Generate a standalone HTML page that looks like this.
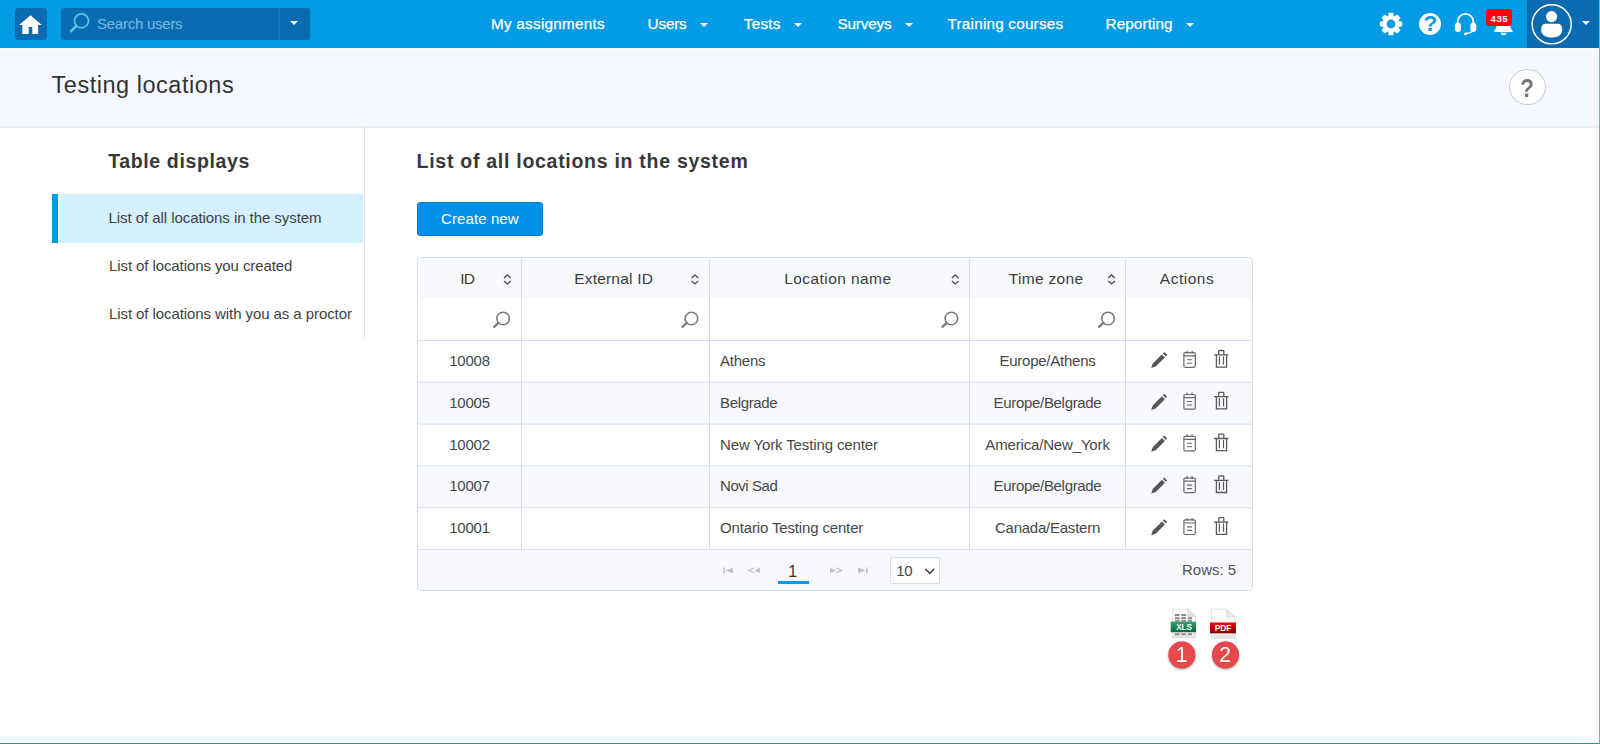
<!DOCTYPE html>
<html lang="en">
<head>
<meta charset="utf-8">
<title>Testing locations</title>
<style>
*{box-sizing:border-box;margin:0;padding:0}
html,body{width:1600px;height:744px;overflow:hidden;background:#fff}
body{position:relative;font-family:"Liberation Sans",sans-serif;color:#3a3a3a;font-size:15px}
.abs{position:absolute}
.t{position:absolute;white-space:nowrap;line-height:1}
/* top bar */
#topbar{position:absolute;left:0;top:0;width:1600px;height:48px;background:#039be5}
#home{position:absolute;left:15px;top:8px;width:32px;height:32px;border-radius:4px;background:#0b6bb0}
#search{position:absolute;left:61px;top:8px;width:249px;height:32px;border-radius:3px;background:#0b6bb0}
#search .div{position:absolute;left:218px;top:0;width:1px;height:32px;background:#0a7ac6;box-shadow:-1px 0 0 rgba(10,122,198,.35)}
.nav{color:#fff;font-size:15.3px;-webkit-text-stroke:.25px #fff}
.caret{position:absolute;width:0;height:0;border-left:4.1px solid transparent;border-right:4.1px solid transparent;border-top:4.6px solid #fff}
#userbox{position:absolute;left:1527px;top:0;width:72px;height:48px;background:#0b6bb0}
#edge{position:absolute;left:1599px;top:0;width:1px;height:744px;background:#2fd0dc}
#bottomline{position:absolute;left:0;top:743px;width:1600px;height:1px;background:#1f9a78}
/* sub header */
#subhead{position:absolute;left:0;top:48px;width:1599px;height:79px;background:#f5f8fe;border-bottom:1px solid #e8eaee}
#helpc{position:absolute;left:1509.2px;top:68.6px;width:36.6px;height:36.4px;border-radius:50%;background:#fff;border:1px solid #c9cfe2}
/* sidebar */
#sideborder{position:absolute;left:364px;top:127px;width:1px;height:212px;background:#e3e3e6}
#active{position:absolute;left:51.8px;top:194px;width:311.6px;height:48.6px;background:linear-gradient(90deg,#039be5 0,#039be5 6.5px,#e6f6ff 6.5px,#e6f6ff 8px,#d5f0ff 8px)}
/* button */
#create{position:absolute;left:416.6px;top:201.8px;width:126.5px;height:33.8px;border-radius:3px;background:#0390e8;border:1px solid #0a7fd0}
/* table */
#table{position:absolute;left:417px;top:257px;width:836px;height:334px;border:1px solid #d5dcf1;border-radius:4px;background:#fff;overflow:hidden}
.row{position:absolute;left:0;width:834px}
.hl{position:absolute;left:0;width:834px;height:1px;background:#d5dcf1}
.vl{position:absolute;top:1px;width:1px;height:291px;background:#d5dcf1}
.cell{color:#474747;font-size:15px}
.cell2{color:#3f3f3f;font-size:15px}
.th{color:#3c3c3c;font-size:15.5px}
</style>
</head>
<body>
<div id="topbar">
  <div id="home">
    <svg class="abs" style="left:4px;top:7px" width="24" height="20" viewBox="0 0 24 20"><path d="M11.5 0.2 L22.9 10 L19.1 10 L19.1 18.9 L13.3 18.9 L13.3 12 L9.7 12 L9.7 18.9 L3.3 18.9 L3.3 10 L0.1 10 Z" fill="#fff"/></svg>
  </div>
  <div id="search">
    <svg class="abs" style="left:6px;top:4px" width="24" height="24" viewBox="0 0 24 24"><circle cx="14.5" cy="8.8" r="7" fill="none" stroke="#5cc5e4" stroke-width="1.7"/><path d="M9.6 13.8 L3.3 19.9" stroke="#5cc5e4" stroke-width="2.7"/></svg>
    <span class="t" style="left:36px;top:8px;font-size:15px;color:#76bce8;letter-spacing:-0.25px">Search users</span>
    <div class="div"></div>
    <div class="caret" style="left:228.6px;top:13px;border-top-width:4.6px"></div>
  </div>
  <span class="t nav" style="left:491px;top:15.6px;letter-spacing:.24px">My assignments</span>
  <span class="t nav" style="left:647.6px;top:15.6px;letter-spacing:-.2px">Users</span><div class="caret" style="left:699.8px;top:23.3px"></div>
  <span class="t nav" style="left:743.8px;top:15.6px;letter-spacing:.25px">Tests</span><div class="caret" style="left:794.4px;top:23.3px"></div>
  <span class="t nav" style="left:837.5px;top:15.6px;letter-spacing:-.18px">Surveys</span><div class="caret" style="left:904.6px;top:23.3px"></div>
  <span class="t nav" style="left:947.6px;top:15.6px;letter-spacing:.2px">Training courses</span>
  <span class="t nav" style="left:1105.5px;top:15.6px;letter-spacing:.1px">Reporting</span><div class="caret" style="left:1185.6px;top:23.3px"></div>
  <!-- gear -->
  <svg class="abs" style="left:1379px;top:12px" width="24" height="24" viewBox="-12 -12 24 24"><g fill="#fff"><path id="tooth" d="M-2.3 -11.2 L2.3 -11.2 L3 -7 L-3 -7 Z"/><path d="M-2.3 -11.2 L2.3 -11.2 L3 -7 L-3 -7 Z" transform="rotate(45)"/><path d="M-2.3 -11.2 L2.3 -11.2 L3 -7 L-3 -7 Z" transform="rotate(90)"/><path d="M-2.3 -11.2 L2.3 -11.2 L3 -7 L-3 -7 Z" transform="rotate(135)"/><path d="M-2.3 -11.2 L2.3 -11.2 L3 -7 L-3 -7 Z" transform="rotate(180)"/><path d="M-2.3 -11.2 L2.3 -11.2 L3 -7 L-3 -7 Z" transform="rotate(225)"/><path d="M-2.3 -11.2 L2.3 -11.2 L3 -7 L-3 -7 Z" transform="rotate(270)"/><path d="M-2.3 -11.2 L2.3 -11.2 L3 -7 L-3 -7 Z" transform="rotate(315)"/></g><circle r="6.3" fill="none" stroke="#fff" stroke-width="3.8"/></svg>
  <!-- help -->
  <div class="abs" style="left:1419px;top:13px;width:22px;height:22px;border-radius:50%;background:#fff"></div>
  <span class="t" style="left:1423.4px;top:13.3px;font-size:22.5px;font-weight:700;color:#039be5">?</span>
  <!-- headset -->
  <svg class="abs" style="left:1453px;top:11px" width="26" height="26" viewBox="0 0 26 26"><path d="M4.7 12.4 V10.6 A7.8 7.8 0 0 1 20.3 10.6 V12.4" fill="none" stroke="#fff" stroke-width="1.8"/><rect x="1.9" y="11.7" width="6.1" height="9.3" rx="3" fill="#fff"/><rect x="17.3" y="11.7" width="6" height="9.3" rx="3" fill="#fff"/><path d="M20.2 19.4 C19.8 21.3 16.4 21.9 13.2 22.8" fill="none" stroke="#fff" stroke-width="1.3"/><ellipse cx="12.8" cy="22.7" rx="1.9" ry="1.35" fill="#fff" transform="rotate(-18 12.8 22.7)"/></svg>
  <!-- bell -->
  <svg class="abs" style="left:1492px;top:12px" width="24" height="24" viewBox="0 0 24 24"><path d="M11.4 2 C7 2 5.4 6 5.2 10 C5 14.5 4 16.6 2.1 18.9 L2.1 20 L20.6 20 L20.6 18.9 C18.8 16.6 17.8 14.5 17.6 10 C17.4 6 15.8 2 11.4 2 Z" fill="#fff"/><path d="M8.6 20.7 A3 2.5 0 0 0 14.6 20.7 Z" fill="#fff"/></svg>
  <div class="abs" style="left:1486.2px;top:9px;width:26px;height:16.6px;border-radius:3.5px;background:#fd0209"></div>
  <span class="t" style="left:1490.6px;top:14.4px;font-size:9.7px;font-weight:700;color:#fff;letter-spacing:.4px">435</span>
  <div id="userbox">
    <svg class="abs" style="left:2px;top:1px" width="46" height="46" viewBox="0 0 46 46"><circle cx="22.7" cy="23.3" r="19.55" fill="none" stroke="#fff" stroke-width="1.5"/><circle cx="22.6" cy="15.6" r="5.6" fill="#fff"/><path d="M12.2 29 C12.2 24.6 13.6 22.7 17.4 22.7 L28 22.7 C31.8 22.7 33.2 24.6 33.2 29 C33.2 34 28.6 36.6 22.7 36.6 C16.8 36.6 12.2 34 12.2 29 Z" fill="#fff"/></svg>
    <div class="caret" style="left:55.2px;top:21px"></div>
  </div>
</div>
<div id="subhead"></div>
<div class="abs" style="left:0;top:48px;width:1599px;height:1px;background:#fcfdff"></div>
<div class="abs" style="left:0;top:127px;width:1599px;height:1px;background:#eeeeef"></div>
<span class="t" style="left:51.5px;top:74px;font-size:23.5px;color:#333;letter-spacing:.53px">Testing locations</span>
<div id="helpc"></div>
<span class="t" style="left:1520.3px;top:77.9px;font-size:22.5px;font-weight:700;color:#757575;transform:scaleY(1.17);transform-origin:50% 55%">?</span>

<div id="sideborder"></div>
<span class="t" style="left:108.2px;top:152px;font-size:19.5px;font-weight:700;color:#383838;letter-spacing:.63px">Table displays</span>
<div id="active"></div>
<span class="t cell2" style="left:108.5px;top:210px;letter-spacing:-.06px">List of all locations in the system</span>
<span class="t cell2" style="left:109px;top:258px;letter-spacing:-.09px">List of locations you created</span>
<span class="t cell2" style="left:109px;top:306px;letter-spacing:-.08px">List of locations with you as a proctor</span>

<span class="t" style="left:416.6px;top:152.2px;font-size:19.5px;font-weight:700;color:#383838;letter-spacing:.72px">List of all locations in the system</span>
<div id="create"></div>
<span class="t" style="left:441px;top:210.5px;font-size:15px;color:#fff;letter-spacing:.1px">Create new</span>

<!--TABLE-START-->
<div id="table">
<svg class="abs" style="left:0;top:0" width="834" height="332" viewBox="0 0 834 332"><rect x="1.00" y="1.00" width="833.00" height="39.00" fill="#f8f9fd"/><rect x="0.00" y="124.80" width="834.00" height="40.80" fill="#f8f9fd"/><rect x="0.00" y="208.40" width="834.00" height="40.80" fill="#f8f9fd"/><rect x="0.00" y="292.00" width="834.00" height="40.00" fill="#f8f9fd"/><rect x="0.00" y="82.00" width="834.00" height="1.00" fill="#d5dcf1"/><rect x="0.00" y="123.80" width="834.00" height="1.00" fill="#d5dcf1"/><rect x="0.00" y="165.60" width="834.00" height="1.00" fill="#d5dcf1"/><rect x="0.00" y="207.40" width="834.00" height="1.00" fill="#d5dcf1"/><rect x="0.00" y="249.20" width="834.00" height="1.00" fill="#d5dcf1"/><rect x="0.00" y="291.00" width="834.00" height="1.00" fill="#d5dcf1"/><rect x="103.00" y="1.00" width="1.00" height="290.00" fill="#d5dcf1"/><rect x="291.00" y="1.00" width="1.00" height="290.00" fill="#d5dcf1"/><rect x="551.00" y="1.00" width="1.00" height="290.00" fill="#d5dcf1"/><rect x="707.00" y="1.00" width="1.00" height="290.00" fill="#d5dcf1"/></svg>
<span class="t th" style="left:42.3px;top:13.3px;letter-spacing:-0.9px">ID</span>
<span class="t th" style="left:156.2px;top:13.3px;letter-spacing:0.2px">External ID</span>
<span class="t th" style="left:366.2px;top:13.3px;letter-spacing:0.43px">Location name</span>
<span class="t th" style="left:590.7px;top:13.3px;letter-spacing:0.33px">Time zone</span>
<span class="t th" style="left:741.8px;top:13.3px;letter-spacing:0.5px">Actions</span>
<svg class="abs" style="left:84px;top:15px" width="11" height="13" viewBox="0 0 11 13"><g transform="translate(0.30,0.40)"><path d="M1.7 4.5 L5 1.5 L8.3 4.5 M1.7 7.5 L5 10.5 L8.3 7.5" fill="none" stroke="#505050" stroke-width="1.4"/></g></svg>
<svg class="abs" style="left:271px;top:15px" width="11" height="13" viewBox="0 0 11 13"><g transform="translate(0.90,0.40)"><path d="M1.7 4.5 L5 1.5 L8.3 4.5 M1.7 7.5 L5 10.5 L8.3 7.5" fill="none" stroke="#505050" stroke-width="1.4"/></g></svg>
<svg class="abs" style="left:532px;top:15px" width="11" height="13" viewBox="0 0 11 13"><g transform="translate(0.20,0.40)"><path d="M1.7 4.5 L5 1.5 L8.3 4.5 M1.7 7.5 L5 10.5 L8.3 7.5" fill="none" stroke="#505050" stroke-width="1.4"/></g></svg>
<svg class="abs" style="left:688px;top:15px" width="11" height="13" viewBox="0 0 11 13"><g transform="translate(0.50,0.40)"><path d="M1.7 4.5 L5 1.5 L8.3 4.5 M1.7 7.5 L5 10.5 L8.3 7.5" fill="none" stroke="#505050" stroke-width="1.4"/></g></svg>
<svg class="abs" style="left:73px;top:52px" width="21" height="21" viewBox="0 0 21 21"><g transform="translate(0.10,0.50)"><circle cx="12" cy="8" r="6.3" fill="none" stroke="#7d7d7d" stroke-width="1.6"/><path d="M7.4 12.4 L3.1 16.3" stroke="#7d7d7d" stroke-width="2.4" stroke-linecap="round"/></g></svg>
<svg class="abs" style="left:261px;top:52px" width="21" height="21" viewBox="0 0 21 21"><g transform="translate(0.40,0.50)"><circle cx="12" cy="8" r="6.3" fill="none" stroke="#7d7d7d" stroke-width="1.6"/><path d="M7.4 12.4 L3.1 16.3" stroke="#7d7d7d" stroke-width="2.4" stroke-linecap="round"/></g></svg>
<svg class="abs" style="left:521px;top:52px" width="21" height="21" viewBox="0 0 21 21"><g transform="translate(0.40,0.50)"><circle cx="12" cy="8" r="6.3" fill="none" stroke="#7d7d7d" stroke-width="1.6"/><path d="M7.4 12.4 L3.1 16.3" stroke="#7d7d7d" stroke-width="2.4" stroke-linecap="round"/></g></svg>
<svg class="abs" style="left:678px;top:52px" width="21" height="21" viewBox="0 0 21 21"><g transform="translate(0.00,0.50)"><circle cx="12" cy="8" r="6.3" fill="none" stroke="#7d7d7d" stroke-width="1.6"/><path d="M7.4 12.4 L3.1 16.3" stroke="#7d7d7d" stroke-width="2.4" stroke-linecap="round"/></g></svg>
<span class="t cell" style="left:0px;width:103px;text-align:center;top:95.3px;letter-spacing:-0.22px">10008</span>
<span class="t cell" style="left:302.0px;top:95.3px;letter-spacing:-0.24px">Athens</span>
<span class="t cell" style="left:552px;width:155px;text-align:center;top:95.3px;letter-spacing:-0.24px">Europe/Athens</span>
<svg class="abs" style="left:732px;top:91px" width="19" height="21" viewBox="0 0 19 21"><g transform="translate(0.00,0.80)"><path d="M1.2 18.3 L2.7 13.8 L11.9 4.6 L14.9 7.6 L5.7 16.8 Z M12.8 3.6 L14.2 2.2 L17.2 5.2 L15.8 6.6 Z" fill="#575757"/></g></svg>
<svg class="abs" style="left:763px;top:91px" width="19" height="21" viewBox="0 0 19 21"><g transform="translate(0.00,0.40)"><rect x="2.9" y="3.3" width="11.4" height="14.6" rx="1.2" fill="none" stroke="#686868" stroke-width="1.2"/><path d="M2.9 6.4 H14.3 M6.1 1.3 V4 M11.1 1.3 V4" stroke="#686868" stroke-width="1.2" fill="none"/><path d="M6 10.3 H11.2 M6 13.8 H11.2" stroke="#686868" stroke-width="1.1" fill="none"/></g></svg>
<svg class="abs" style="left:794px;top:91px" width="19" height="21" viewBox="0 0 19 21"><g transform="translate(0.00,0.60)"><path d="M4.4 5.3 V17.5 H14.6 V5.3" fill="none" stroke="#5a5a5a" stroke-width="1.3"/><path d="M2.1 5.3 H16.4" stroke="#5a5a5a" stroke-width="1.3"/><path d="M6.7 5.2 V1.6 Q6.7 0.9 7.4 0.9 H11.1 Q11.8 0.9 11.8 1.6 V5.2" fill="none" stroke="#5a5a5a" stroke-width="1.3"/><path d="M7.4 6.8 V15 M11.5 6.8 V15" stroke="#5a5a5a" stroke-width="1.2"/></g></svg>
<span class="t cell" style="left:0px;width:103px;text-align:center;top:137.1px;letter-spacing:-0.22px">10005</span>
<span class="t cell" style="left:302.0px;top:137.1px;letter-spacing:-0.34px">Belgrade</span>
<span class="t cell" style="left:552px;width:155px;text-align:center;top:137.1px;letter-spacing:-0.32px">Europe/Belgrade</span>
<svg class="abs" style="left:732px;top:133px" width="19" height="21" viewBox="0 0 19 21"><g transform="translate(0.00,0.60)"><path d="M1.2 18.3 L2.7 13.8 L11.9 4.6 L14.9 7.6 L5.7 16.8 Z M12.8 3.6 L14.2 2.2 L17.2 5.2 L15.8 6.6 Z" fill="#575757"/></g></svg>
<svg class="abs" style="left:763px;top:133px" width="19" height="21" viewBox="0 0 19 21"><g transform="translate(0.00,0.20)"><rect x="2.9" y="3.3" width="11.4" height="14.6" rx="1.2" fill="none" stroke="#686868" stroke-width="1.2"/><path d="M2.9 6.4 H14.3 M6.1 1.3 V4 M11.1 1.3 V4" stroke="#686868" stroke-width="1.2" fill="none"/><path d="M6 10.3 H11.2 M6 13.8 H11.2" stroke="#686868" stroke-width="1.1" fill="none"/></g></svg>
<svg class="abs" style="left:794px;top:133px" width="19" height="21" viewBox="0 0 19 21"><g transform="translate(0.00,0.40)"><path d="M4.4 5.3 V17.5 H14.6 V5.3" fill="none" stroke="#5a5a5a" stroke-width="1.3"/><path d="M2.1 5.3 H16.4" stroke="#5a5a5a" stroke-width="1.3"/><path d="M6.7 5.2 V1.6 Q6.7 0.9 7.4 0.9 H11.1 Q11.8 0.9 11.8 1.6 V5.2" fill="none" stroke="#5a5a5a" stroke-width="1.3"/><path d="M7.4 6.8 V15 M11.5 6.8 V15" stroke="#5a5a5a" stroke-width="1.2"/></g></svg>
<span class="t cell" style="left:0px;width:103px;text-align:center;top:178.8px;letter-spacing:-0.22px">10002</span>
<span class="t cell" style="left:302.0px;top:178.8px;letter-spacing:-0.12px">New York Testing center</span>
<span class="t cell" style="left:552px;width:155px;text-align:center;top:178.8px;letter-spacing:-0.16px">America/New_York</span>
<svg class="abs" style="left:732px;top:175px" width="19" height="21" viewBox="0 0 19 21"><g transform="translate(0.00,0.40)"><path d="M1.2 18.3 L2.7 13.8 L11.9 4.6 L14.9 7.6 L5.7 16.8 Z M12.8 3.6 L14.2 2.2 L17.2 5.2 L15.8 6.6 Z" fill="#575757"/></g></svg>
<svg class="abs" style="left:763px;top:175px" width="19" height="21" viewBox="0 0 19 21"><g transform="translate(0.00,0.00)"><rect x="2.9" y="3.3" width="11.4" height="14.6" rx="1.2" fill="none" stroke="#686868" stroke-width="1.2"/><path d="M2.9 6.4 H14.3 M6.1 1.3 V4 M11.1 1.3 V4" stroke="#686868" stroke-width="1.2" fill="none"/><path d="M6 10.3 H11.2 M6 13.8 H11.2" stroke="#686868" stroke-width="1.1" fill="none"/></g></svg>
<svg class="abs" style="left:794px;top:175px" width="19" height="21" viewBox="0 0 19 21"><g transform="translate(0.00,0.20)"><path d="M4.4 5.3 V17.5 H14.6 V5.3" fill="none" stroke="#5a5a5a" stroke-width="1.3"/><path d="M2.1 5.3 H16.4" stroke="#5a5a5a" stroke-width="1.3"/><path d="M6.7 5.2 V1.6 Q6.7 0.9 7.4 0.9 H11.1 Q11.8 0.9 11.8 1.6 V5.2" fill="none" stroke="#5a5a5a" stroke-width="1.3"/><path d="M7.4 6.8 V15 M11.5 6.8 V15" stroke="#5a5a5a" stroke-width="1.2"/></g></svg>
<span class="t cell" style="left:0px;width:103px;text-align:center;top:220.2px;letter-spacing:-0.22px">10007</span>
<span class="t cell" style="left:302.0px;top:220.2px;letter-spacing:-0.44px">Novi Sad</span>
<span class="t cell" style="left:552px;width:155px;text-align:center;top:220.2px;letter-spacing:-0.32px">Europe/Belgrade</span>
<svg class="abs" style="left:732px;top:217px" width="19" height="21" viewBox="0 0 19 21"><g transform="translate(0.00,0.20)"><path d="M1.2 18.3 L2.7 13.8 L11.9 4.6 L14.9 7.6 L5.7 16.8 Z M12.8 3.6 L14.2 2.2 L17.2 5.2 L15.8 6.6 Z" fill="#575757"/></g></svg>
<svg class="abs" style="left:763px;top:216px" width="19" height="21" viewBox="0 0 19 21"><g transform="translate(0.00,0.80)"><rect x="2.9" y="3.3" width="11.4" height="14.6" rx="1.2" fill="none" stroke="#686868" stroke-width="1.2"/><path d="M2.9 6.4 H14.3 M6.1 1.3 V4 M11.1 1.3 V4" stroke="#686868" stroke-width="1.2" fill="none"/><path d="M6 10.3 H11.2 M6 13.8 H11.2" stroke="#686868" stroke-width="1.1" fill="none"/></g></svg>
<svg class="abs" style="left:794px;top:217px" width="19" height="21" viewBox="0 0 19 21"><g transform="translate(0.00,0.00)"><path d="M4.4 5.3 V17.5 H14.6 V5.3" fill="none" stroke="#5a5a5a" stroke-width="1.3"/><path d="M2.1 5.3 H16.4" stroke="#5a5a5a" stroke-width="1.3"/><path d="M6.7 5.2 V1.6 Q6.7 0.9 7.4 0.9 H11.1 Q11.8 0.9 11.8 1.6 V5.2" fill="none" stroke="#5a5a5a" stroke-width="1.3"/><path d="M7.4 6.8 V15 M11.5 6.8 V15" stroke="#5a5a5a" stroke-width="1.2"/></g></svg>
<span class="t cell" style="left:0px;width:103px;text-align:center;top:262.3px;letter-spacing:-0.22px">10001</span>
<span class="t cell" style="left:302.0px;top:262.3px;letter-spacing:-0.15px">Ontario Testing center</span>
<span class="t cell" style="left:552px;width:155px;text-align:center;top:262.3px;letter-spacing:-0.24px">Canada/Eastern</span>
<svg class="abs" style="left:732px;top:259px" width="19" height="21" viewBox="0 0 19 21"><g transform="translate(0.00,0.00)"><path d="M1.2 18.3 L2.7 13.8 L11.9 4.6 L14.9 7.6 L5.7 16.8 Z M12.8 3.6 L14.2 2.2 L17.2 5.2 L15.8 6.6 Z" fill="#575757"/></g></svg>
<svg class="abs" style="left:763px;top:258px" width="19" height="21" viewBox="0 0 19 21"><g transform="translate(0.00,0.60)"><rect x="2.9" y="3.3" width="11.4" height="14.6" rx="1.2" fill="none" stroke="#686868" stroke-width="1.2"/><path d="M2.9 6.4 H14.3 M6.1 1.3 V4 M11.1 1.3 V4" stroke="#686868" stroke-width="1.2" fill="none"/><path d="M6 10.3 H11.2 M6 13.8 H11.2" stroke="#686868" stroke-width="1.1" fill="none"/></g></svg>
<svg class="abs" style="left:794px;top:258px" width="19" height="21" viewBox="0 0 19 21"><g transform="translate(0.00,0.80)"><path d="M4.4 5.3 V17.5 H14.6 V5.3" fill="none" stroke="#5a5a5a" stroke-width="1.3"/><path d="M2.1 5.3 H16.4" stroke="#5a5a5a" stroke-width="1.3"/><path d="M6.7 5.2 V1.6 Q6.7 0.9 7.4 0.9 H11.1 Q11.8 0.9 11.8 1.6 V5.2" fill="none" stroke="#5a5a5a" stroke-width="1.3"/><path d="M7.4 6.8 V15 M11.5 6.8 V15" stroke="#5a5a5a" stroke-width="1.2"/></g></svg>
<svg class="abs" style="left:304px;top:307px" width="150" height="12" viewBox="0 0 150 12"><rect x="1.3" y="2.5" width="1.7" height="5.8" fill="#c2c2c2"/><polygon points="11,2.5 11,8.3 3.5,5.4" fill="#c2c2c2"/><path d="M32.3 2.8 L26.8 5.4 L32.3 8" fill="none" stroke="#c2c2c2" stroke-width="1.2"/><polygon points="38,2.5 38,8.3 32.4,5.4" fill="#c2c2c2"/><polygon points="108,2.5 108,8.3 113.8,5.4" fill="#c2c2c2"/><path d="M114.2 2.8 L119.7 5.4 L114.2 8" fill="none" stroke="#c2c2c2" stroke-width="1.2"/><polygon points="136,2.5 136,8.3 143.5,5.4" fill="#c2c2c2"/><rect x="144" y="2.5" width="1.7" height="5.8" fill="#c2c2c2"/></svg>
<span class="t th" style="left:370.3px;top:305.6px;letter-spacing:0px;font-size:16px;color:#333">1</span>
<div class="abs" style="left:359.8px;top:323px;width:31.2px;height:3px;background:#039be5"></div>
<div class="abs" style="left:472px;top:299px;width:50px;height:27px;border:1px solid #d5dcf1;border-radius:2px;background:#fff"></div>
<span class="t th" style="left:478.3px;top:305.3px;letter-spacing:-0.4px;font-size:15px;color:#444">10</span>
<svg class="abs" style="left:505px;top:308px" width="14" height="10" viewBox="0 0 14 10"><path d="M2.3 2.8 L6.8 7.3 L11.3 2.8" fill="none" stroke="#444" stroke-width="1.6"/></svg>
<span class="t th" style="left:764.0px;top:304.0px;letter-spacing:0px;font-size:15px;color:#525252">Rows: 5</span>
</div>
<svg class="abs" style="left:1168px;top:606px" width="32" height="36" viewBox="0 0 32 36">
<defs><linearGradient id="gg" x1="0" y1="0" x2="0" y2="1"><stop offset="0" stop-color="#339f6d"/><stop offset="1" stop-color="#0a693c"/></linearGradient><linearGradient id="pg" x1="0" y1="0" x2="0" y2="1"><stop offset="0" stop-color="#fdfdfd"/><stop offset=".7" stop-color="#f6f6f6"/><stop offset="1" stop-color="#e2e2e2"/></linearGradient></defs>
<path d="M4.6 3.1 H19.7 L27.7 10.4 V31.9 H4.6 Z" fill="url(#pg)" stroke="#d9d9d9" stroke-width=".7"/>
<path d="M19.7 3.1 V10.4 H27.7 Z" fill="#e3e3e3" stroke="#d0d0d0" stroke-width=".5"/>
<g fill="#8a8a8a"><rect x="6.8" y="8" width="4.8" height="2.1"/><rect x="13.2" y="8" width="4.8" height="2.1"/><rect x="6.8" y="11.2" width="4.8" height="2.1"/><rect x="13.2" y="11.2" width="4.8" height="2.1"/><rect x="19.7" y="11.2" width="4.3" height="2.1"/><rect x="6.8" y="14.1" width="4.8" height="1.7"/><rect x="13.2" y="14.1" width="4.8" height="1.7"/><rect x="19.7" y="14.1" width="4.3" height="1.7"/><rect x="6.8" y="27.3" width="4.8" height="1.9"/><rect x="13.2" y="27.3" width="4.8" height="1.9"/><rect x="19.7" y="27.3" width="4.3" height="1.9"/></g>
<rect x="2.7" y="15.7" width="25.3" height="10.5" fill="url(#gg)"/>
<text x="16.1" y="23.9" font-family="Liberation Sans, sans-serif" font-size="8.2" font-weight="700" fill="#fff" text-anchor="middle">XLS</text>
</svg>
<svg class="abs" style="left:1207px;top:606px" width="32" height="36" viewBox="0 0 32 36">
<defs><linearGradient id="rg" x1="0" y1="0" x2="0" y2="1"><stop offset="0" stop-color="#ef0a0a"/><stop offset="1" stop-color="#7c0204"/></linearGradient></defs>
<path d="M4.4 3.1 H19.4 L28 10.9 V32.3 H4.4 Z" fill="url(#pg)" stroke="#d9d9d9" stroke-width=".7"/>
<path d="M19.4 3.1 V10.9 H28 Z" fill="#e6e6e6" stroke="#d0d0d0" stroke-width=".5"/>
<rect x="3" y="16.5" width="26" height="10.8" fill="url(#rg)"/>
<text x="16" y="25.2" font-family="Liberation Sans, sans-serif" font-size="8.4" font-weight="700" fill="#fff" text-anchor="middle">PDF</text>
</svg>
<svg class="abs" style="left:1164px;top:637px" width="36" height="38" viewBox="0 0 36 38"><defs><filter id="sh1" x="-30%" y="-30%" width="160%" height="170%"><feGaussianBlur stdDeviation="1.1"/></filter></defs><circle cx="17.9" cy="19" r="13.4" fill="#000" opacity=".38" filter="url(#sh1)"/><circle cx="17.9" cy="17.8" r="13.6" fill="#e8474c"/></svg>
<span class="t" style="left:1168.5px;width:26px;text-align:center;top:643.6px;font-size:21px;color:#fff;transform:scaleY(1.08);transform-origin:50% 88%">1</span>
<svg class="abs" style="left:1208px;top:637px" width="36" height="38" viewBox="0 0 36 38"><defs><filter id="sh2" x="-30%" y="-30%" width="160%" height="170%"><feGaussianBlur stdDeviation="1.1"/></filter></defs><circle cx="17.5" cy="19" r="13.4" fill="#000" opacity=".38" filter="url(#sh2)"/><circle cx="17.5" cy="17.8" r="13.6" fill="#e8474c"/></svg>
<span class="t" style="left:1212.1px;width:26px;text-align:center;top:643.6px;font-size:21px;color:#fff;transform:scaleY(1.08);transform-origin:50% 88%">2</span>
<!--TABLE-END-->
<div id="edge"></div>
<div id="bottomline"></div>
</body>
</html>
